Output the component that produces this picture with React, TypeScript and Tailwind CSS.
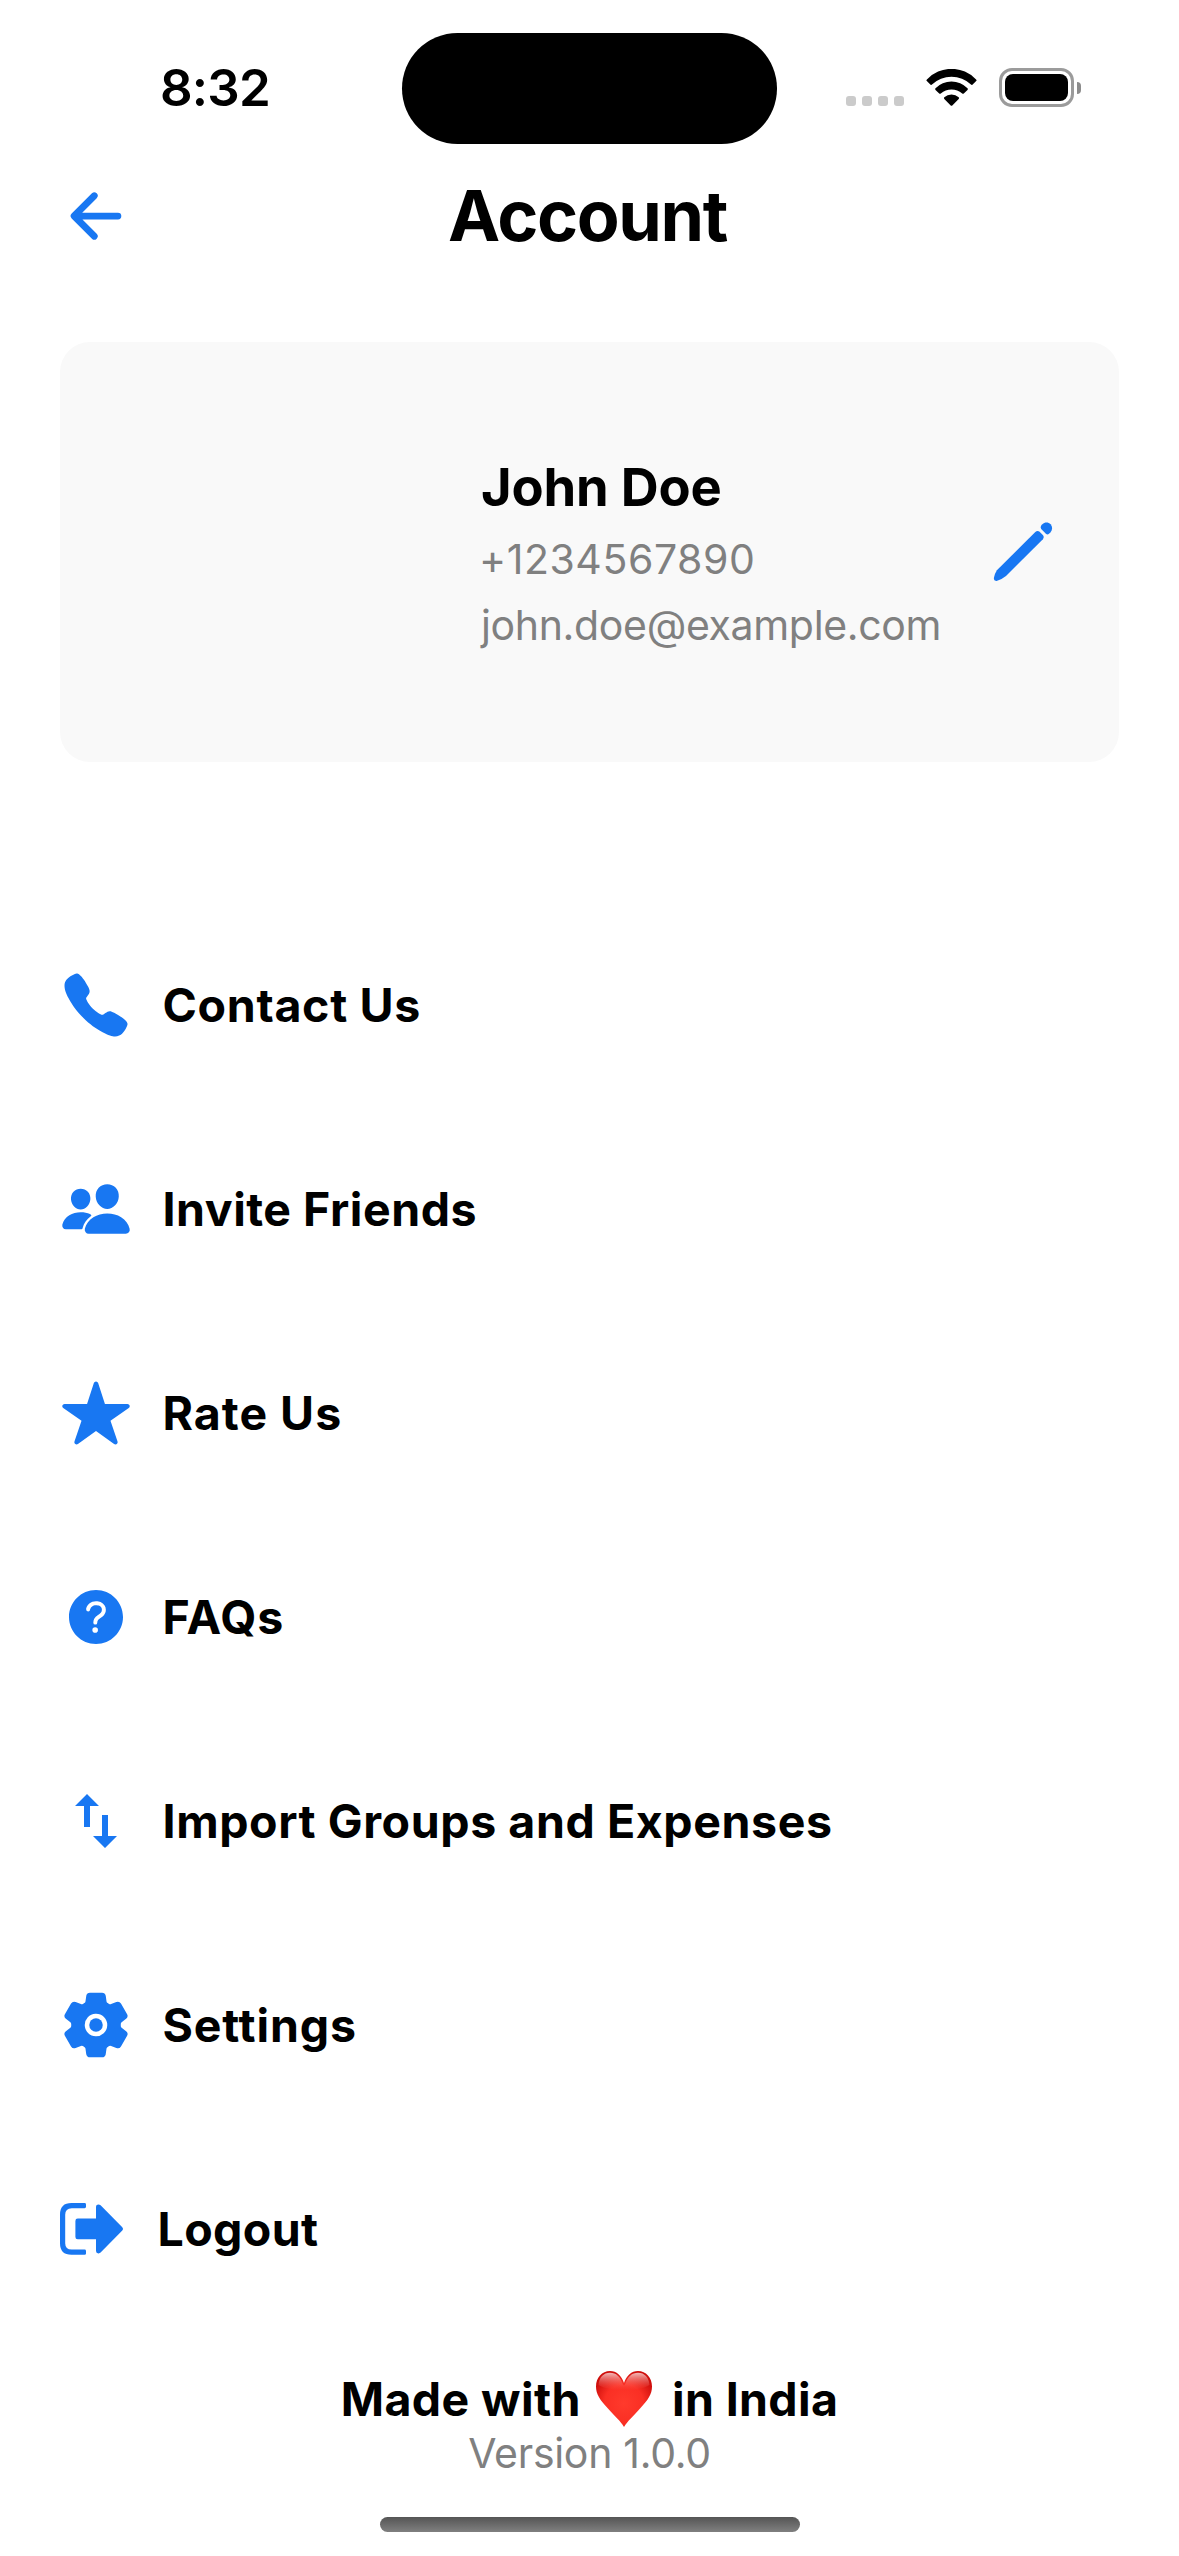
import React from 'react';
import { IoArrowBack, IoCall, IoPeople, IoStar, IoHelpCircle, IoSettings } from 'react-icons/io5';
import { MdImportExport } from 'react-icons/md';

function WifiIcon() {
  return (
    <svg viewBox="0 0 51 38" className="ml-[22px] h-[38px] w-[51px]" fill="#000">
      <path d="M.9 10.5A33.7 33.7 0 0 1 50.1 10.5Q51 11.3 50.2 12.1L46.4 15.7Q45.7 16.3 45 15.6A28.3 28.3 0 0 0 6 15.6Q5.3 16.3 4.6 15.7L.8 12.1Q0 11.3.9 10.5Z" />
      <path d="M9.5 19.3A22.3 22.3 0 0 1 41.5 19.3Q42.3 20.1 41.5 20.9L37.8 24.5Q37 25.2 36.2 24.5A16.4 16.4 0 0 0 14.8 24.5Q14 25.2 13.2 24.5L9.5 20.9Q8.7 20.1 9.5 19.3Z" />
      <path d="M18.3 28.3A10.5 10.5 0 0 1 32.7 28.3Q33.5 29.1 32.7 29.9L26.3 36.4Q25.5 37.2 24.7 36.4L18.3 29.9Q17.5 29.1 18.3 28.3Z" />
    </svg>
  );
}

function Battery() {
  return (
    <div className="ml-[22px] flex items-center">
      <div className="h-[39px] w-[75px] rounded-[13px] border-[3px] border-[#9b9b9b] p-[3px]">
        <div className="h-full w-full rounded-[8px] bg-black" />
      </div>
      <div className="ml-[3px] h-[12px] w-[4px] rounded-r-full bg-[#8c8c8c]" />
    </div>
  );
}

function StatusBar() {
  return (
    <div className="flex h-[175px] items-center">
      <div className="w-[402px] pl-[160px] text-[51px] leading-none font-semibold tracking-[-0.8px]">8:32</div>
      <div className="mt-[2px] h-[111px] w-[375px] rounded-full bg-black" />
      <div className="flex items-center">
        <div className="mt-[27px] ml-[69px] flex gap-[6px]">
          {[0, 1, 2, 3].map((dot) => (
            <div key={dot} className="h-[10px] w-[10px] rounded-[3px] bg-[#cbcbcb]" />
          ))}
        </div>
        <WifiIcon />
        <Battery />
      </div>
    </div>
  );
}

function PencilIcon() {
  return (
    <svg viewBox="7 16 72 72" className="h-[72px] w-[72px]" fill="#1877f2">
      <path d="M55.3 32Q57.5 30 59.6 31.8L62.8 35Q64.6 37 62.9 39.2L26 76Q22 79.4 16.6 80.9Q13.6 81.2 13.9 78Q14.6 73.5 16.9 70.2Z" />
      <path d="M62.4 24.2C64.8 21.9 68.4 22 70.6 24.3C72.7 26.6 72.6 30 70.4 32.4L69 33.8Q67.4 35 65.9 33.7L61.2 29Q60 27.4 61.2 25.6Z" />
    </svg>
  );
}

function LogoutIcon() {
  return (
    <svg viewBox="0 0 67 72" className="h-[72px] w-[67px]" fill="#1877f2">
      <path d="M11.5 10H24.6Q26 10 26 11.4V13.8Q26 15.2 24.6 15.2H11.8Q5.2 15.2 5.2 21.8V50.2Q5.2 56.6 11.8 56.6H24.6Q26 56.6 26 58V60.4Q26 61.8 24.6 61.8H11.5Q0 61.8 0 50.3V21.5Q0 10 11.5 10Z" />
      <path d="M17.7 25.6H36V13.8Q36 11.4 38.4 11.4Q39.6 11.4 40.6 12.3L62.3 34.2Q63.9 35.9 62.3 37.6L40.6 59.6Q39.6 60.5 38.4 60.4Q36 60.3 36 58V46.2H17.7Q15.4 46.2 15.4 43.9V27.9Q15.4 25.6 17.7 25.6Z" />
    </svg>
  );
}

function HeartIcon() {
  return (
    <svg viewBox="0 0 56 56" role="img" aria-label="❤️" className="mr-[20px] ml-[15px] h-[56px] w-[56px]">
      <defs>
        <radialGradient id="heartFill" cx="0.5" cy="0.58" r="0.58">
          <stop offset="0" stopColor="#ff3a2c" />
          <stop offset="0.6" stopColor="#fa2f24" />
          <stop offset="1" stopColor="#cf0f0c" />
        </radialGradient>
        <linearGradient id="heartGloss" x1="0" y1="0" x2="0" y2="1">
          <stop offset="0" stopColor="#fff" stopOpacity="0.72" />
          <stop offset="1" stopColor="#ff6a60" stopOpacity="0" />
        </linearGradient>
      </defs>
      <path d="M28 56C24.5 50 19 45.500 11.500 37C4 29 0 23 0 15.500C0 6.500 6 0 14 0C20.500 0 25.500 4.500 28 12C30.500 4.500 35.500 0 42 0C50 0 56 6.500 56 15.500C56 23 52 29 44.500 37C37 45.500 31.500 50 28 56Z" fill="url(#heartFill)" />
      <path d="M2.500 14C3 6.500 7.500 1.700 14 1.700C20 1.700 24.500 5.500 27 13.500Q28 15.500 29 13.500C31.500 5.500 36 1.700 42 1.700C48.500 1.700 53 6.500 53.500 14C48 18 36 19 28 19C20 19 8 18 2.500 14Z" fill="url(#heartGloss)" />
    </svg>
  );
}

const menu = [
  { label: 'Contact Us', icon: <IoCall />, tracking: 'tracking-[0.7px]' },
  { label: 'Invite Friends', icon: <IoPeople />, tracking: 'tracking-[0.52px]' },
  { label: 'Rate Us', icon: <IoStar />, tracking: 'tracking-[1px]' },
  { label: 'FAQs', icon: <IoHelpCircle />, tracking: 'tracking-[0.9px]' },
  { label: 'Import Groups and Expenses', icon: <MdImportExport />, tracking: 'tracking-[0.58px]' },
  { label: 'Settings', icon: <IoSettings />, tracking: 'tracking-[0.86px]' },
  { label: 'Logout', icon: <LogoutIcon />, tracking: 'tracking-[0.37px]' },
];

export default function App() {
  return (
    <div className="h-[2556px] w-[1179px] overflow-hidden bg-white font-['Inter',sans-serif] text-black">
      <StatusBar />

      <header className="grid h-[82px] grid-cols-[72px_1fr_72px] items-center px-[60px]">
        <IoArrowBack className="text-[72px] text-[#1877f2]" />
        <h1 className="mr-[4px] text-center text-[70px] leading-none font-bold tracking-[-1.4px]">Account</h1>
      </header>

      <section className="mx-[60px] mt-[85px] flex h-[420px] items-center justify-between rounded-[30px] bg-[#f9f9f9] pr-[60px] pl-[421px]">
        <div className="mt-[2px] whitespace-nowrap">
          <h2 className="text-[52.5px] leading-[78px] font-bold tracking-[-0.2px]">John Doe</h2>
          <p className="-ml-[2px] text-[41px] leading-[66px] tracking-[0.56px] text-[#808080]">+1234567890</p>
          <p className="text-[41px] leading-[66px] tracking-[-0.34px] text-[#808080]">john.doe@example.com</p>
        </div>
        <PencilIcon />
      </section>

      <nav className="mt-[141px] px-[60px]">
        {menu.map(({ label, icon, tracking }) => (
          <div key={label} className="flex h-[204px] items-center gap-[30.5px]">
            <div className="text-[72px] text-[#1877f2]">{icon}</div>
            <span className={`text-[46.5px] leading-none font-bold ${tracking}`}>{label}</span>
          </div>
        ))}
      </nav>

      <footer className="mt-[41px] flex flex-col items-center">
        <div className="flex h-[54px] items-center text-[46.5px] leading-none font-bold whitespace-nowrap">
          <span className="tracking-[0.42px]">Made with</span>
          <HeartIcon />
          <span className="tracking-[0.36px]">in India</span>
        </div>
        <p className="text-[41px] leading-[54px] tracking-[-0.29px] text-[#808080]">Version 1.0.0</p>
        <div className="mt-[37px] h-[15px] w-[420px] rounded-full bg-linear-to-b from-[#555555] to-[#808080]" />
      </footer>
    </div>
  );
}
